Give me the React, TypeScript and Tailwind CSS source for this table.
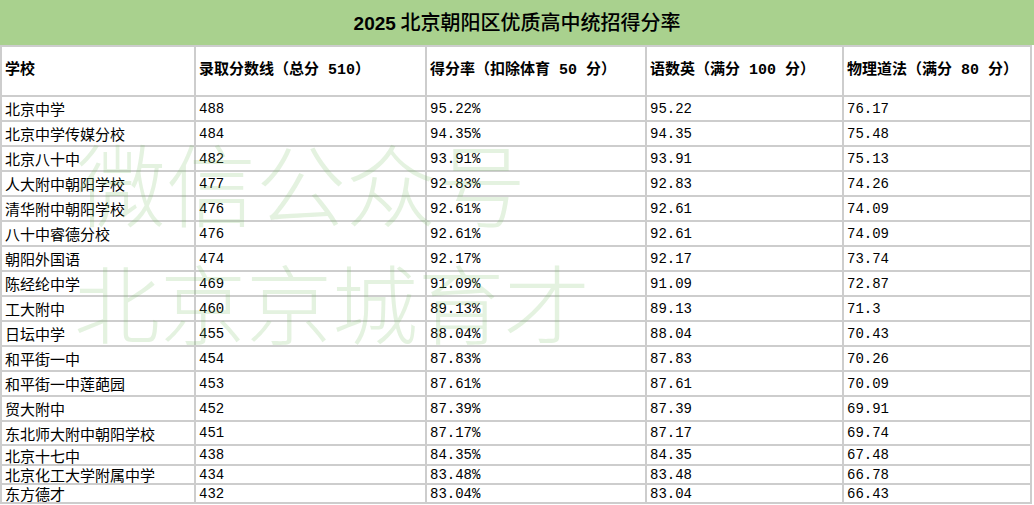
import React from "react";

const rows: [string, string, string, string, string][] = [
  ["北京中学", "488", "95.22%", "95.22", "76.17"],
  ["北京中学传媒分校", "484", "94.35%", "94.35", "75.48"],
  ["北京八十中", "482", "93.91%", "93.91", "75.13"],
  ["人大附中朝阳学校", "477", "92.83%", "92.83", "74.26"],
  ["清华附中朝阳学校", "476", "92.61%", "92.61", "74.09"],
  ["八十中睿德分校", "476", "92.61%", "92.61", "74.09"],
  ["朝阳外国语", "474", "92.17%", "92.17", "73.74"],
  ["陈经纶中学", "469", "91.09%", "91.09", "72.87"],
  ["工大附中", "460", "89.13%", "89.13", "71.3"],
  ["日坛中学", "455", "88.04%", "88.04", "70.43"],
  ["和平街一中", "454", "87.83%", "87.83", "70.26"],
  ["和平街一中莲葩园", "453", "87.61%", "87.61", "70.09"],
  ["贸大附中", "452", "87.39%", "87.39", "69.91"],
  ["东北师大附中朝阳学校", "451", "87.17%", "87.17", "69.74"],
  ["北京十七中", "438", "84.35%", "84.35", "67.48"],
  ["北京化工大学附属中学", "434", "83.48%", "83.48", "66.78"],
  ["东方德才", "432", "83.04%", "83.04", "66.43"],
];

const headers = [
  "学校",
  "录取分数线（总分 510）",
  "得分率（扣除体育 50 分）",
  "语数英（满分 100 分）",
  "物理道法（满分 80 分）",
];

export default function App() {
  return (
    <div className="relative w-[1034px] h-[505px] overflow-hidden bg-white text-black">
      <div className="h-[45px] bg-[#a9d18e] flex items-center justify-center">
        <span className="text-[20px] leading-none font-['Noto_Sans_CJK_SC',sans-serif]">
          <span className="font-bold text-[19px] font-['Liberation_Sans',sans-serif]">2025</span>
          <span className="font-medium"> 北京朝阳区优质高中统招得分率</span>
        </span>
      </div>
      <div className="w-[1032px] grid grid-cols-[192px_229px_218px_195px_186px] grid-rows-[48px_repeat(13,23px)_22px_18px_17px_17px] gap-[2px] p-[2px] bg-[#cdcdcd]">
        {headers.map((h) => (
          <div
            key={h}
            className="bg-white flex items-center pl-[3px] text-[15px] font-bold whitespace-nowrap font-['Liberation_Mono','Noto_Sans_CJK_SC',monospace]"
          >
            {h}
          </div>
        ))}
        {rows.map((r) => (
          <React.Fragment key={r[0]}>
            <div className="bg-white flex items-center pl-[3px] text-[15px] leading-none whitespace-nowrap font-['Noto_Sans_CJK_SC',sans-serif]">
              {r[0]}
            </div>
            {r.slice(1).map((v, i) => (
              <div
                key={i}
                className="bg-white flex items-center pl-[3px] text-[14px] leading-none whitespace-nowrap font-['Liberation_Mono','Noto_Sans_CJK_SC',monospace]"
              >
                {v}
              </div>
            ))}
          </React.Fragment>
        ))}
      </div>
      <div className="pointer-events-none absolute left-[76px] top-[136px] flex flex-col gap-[32px] font-light text-[rgba(120,190,100,0.2)] whitespace-nowrap leading-none font-['Noto_Sans_CJK_SC',sans-serif]">
        <span className="text-[90px]">微信公众号</span>
        <span className="text-[86px] -ml-[2px]">北京京城育才</span>
      </div>
    </div>
  );
}
